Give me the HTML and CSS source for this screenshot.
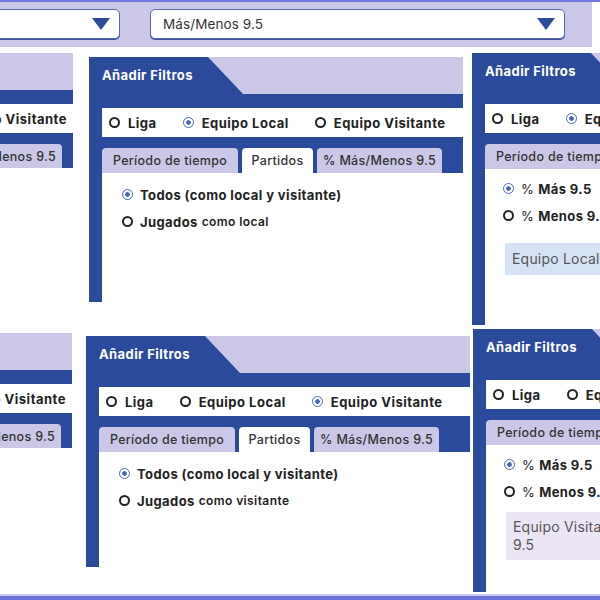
FILE: index.html
```html
<!DOCTYPE html>
<html lang="es">
<head>
<meta charset="utf-8">
<title>Añadir Filtros</title>
<link rel="stylesheet" href="styles.css">
</head>
<body>
<main class="sheet">
  <header class="topbar">
    <div class="select select-a"><span class="select-text"></span><span class="caret"></span></div>
    <div class="select select-b"><span class="select-text">Más/Menos 9.5</span><span class="caret"></span></div>
  </header>

  <section class="row row-1">
    <div class="crop crop-left crop-l1">
      <div class="panel panel-narrow">
        <div class="p-head"><div class="p-title">Añadir Filtros</div></div>
        <div class="p-body">
          <div class="p-radios">
            <label class="opt"><span class="radio"></span>Liga</label>
            <label class="opt"><span class="radio"></span>Equipo Local</label>
            <label class="opt"><span class="radio"></span>Equipo Visitante</label>
          </div>
          <div class="p-tabs">
            <div class="tab t1">Período de tiempo</div>
            <div class="tab t2">Partidos</div>
            <div class="tab t3">% Más/Menos 9.5</div>
          </div>
        </div>
      </div>
    </div>

    <div class="crop crop-mid crop-m1">
      <div class="panel panel-fill">
        <div class="p-head"><div class="p-title">Añadir Filtros</div></div>
        <div class="p-body">
          <div class="p-radios">
            <label class="opt"><span class="radio"></span>Liga</label>
            <label class="opt"><span class="radio on"></span>Equipo Local</label>
            <label class="opt"><span class="radio"></span>Equipo Visitante</label>
          </div>
          <div class="p-tabs">
            <div class="tab t1">Período de tiempo</div>
            <div class="tab t2 active">Partidos</div>
            <div class="tab t3">% Más/Menos 9.5</div>
          </div>
          <div class="p-content">
            <div class="list-opt"><span class="radio on"></span>Todos (como local y visitante)</div>
            <div class="list-opt"><span class="radio"></span>Jugados <span class="sub">como local</span></div>
          </div>
        </div>
      </div>
    </div>

    <div class="crop crop-right crop-r1">
      <div class="panel panel-wide">
        <div class="p-head"><div class="p-title">Añadir Filtros</div></div>
        <div class="p-body">
          <div class="p-radios">
            <label class="opt"><span class="radio"></span>Liga</label>
            <label class="opt"><span class="radio on"></span>Equipo Local</label>
            <label class="opt"><span class="radio"></span>Equipo Visitante</label>
          </div>
          <div class="p-tabs">
            <div class="tab t1">Período de tiempo</div>
            <div class="tab t2">Partidos</div>
            <div class="tab t3 active">% Más/Menos 9.5</div>
          </div>
          <div class="p-content p-content-pct">
            <div class="list-opt"><span class="radio on"></span><span class="pct">%</span> Más 9.5</div>
            <div class="list-opt"><span class="radio"></span><span class="pct">%</span> Menos 9.5</div>
            <div class="note note-blue">Equipo Local Más/Menos 9.5</div>
          </div>
        </div>
      </div>
    </div>
  </section>

  <section class="row row-2">
    <div class="crop crop-left crop-l2">
      <div class="panel panel-narrow">
        <div class="p-head"><div class="p-title">Añadir Filtros</div></div>
        <div class="p-body">
          <div class="p-radios">
            <label class="opt"><span class="radio"></span>Liga</label>
            <label class="opt"><span class="radio"></span>Equipo Local</label>
            <label class="opt"><span class="radio"></span>Equipo Visitante</label>
          </div>
          <div class="p-tabs">
            <div class="tab t1">Período de tiempo</div>
            <div class="tab t2">Partidos</div>
            <div class="tab t3">% Más/Menos 9.5</div>
          </div>
        </div>
      </div>
    </div>

    <div class="crop crop-mid crop-m2">
      <div class="panel panel-fill">
        <div class="p-head"><div class="p-title">Añadir Filtros</div></div>
        <div class="p-body">
          <div class="p-radios">
            <label class="opt"><span class="radio"></span>Liga</label>
            <label class="opt"><span class="radio"></span>Equipo Local</label>
            <label class="opt"><span class="radio on"></span>Equipo Visitante</label>
          </div>
          <div class="p-tabs">
            <div class="tab t1">Período de tiempo</div>
            <div class="tab t2 active">Partidos</div>
            <div class="tab t3">% Más/Menos 9.5</div>
          </div>
          <div class="p-content">
            <div class="list-opt"><span class="radio on"></span>Todos (como local y visitante)</div>
            <div class="list-opt"><span class="radio"></span>Jugados <span class="sub">como visitante</span></div>
          </div>
        </div>
      </div>
    </div>

    <div class="crop crop-right crop-r2">
      <div class="panel panel-wide">
        <div class="p-head"><div class="p-title">Añadir Filtros</div></div>
        <div class="p-body">
          <div class="p-radios">
            <label class="opt"><span class="radio"></span>Liga</label>
            <label class="opt"><span class="radio"></span>Equipo Local</label>
            <label class="opt"><span class="radio on"></span>Equipo Visitante</label>
          </div>
          <div class="p-tabs">
            <div class="tab t1">Período de tiempo</div>
            <div class="tab t2">Partidos</div>
            <div class="tab t3 active">% Más/Menos 9.5</div>
          </div>
          <div class="p-content p-content-pct">
            <div class="list-opt"><span class="radio on"></span><span class="pct">%</span> Más 9.5</div>
            <div class="list-opt"><span class="radio"></span><span class="pct">%</span> Menos 9.5</div>
            <div class="note note-lav">Equipo Visitante Más/Menos<br>9.5</div>
          </div>
        </div>
      </div>
    </div>
  </section>

  <footer class="bottombar"></footer>
</main>
</body>
</html>
```

FILE: styles.css
```css
* { box-sizing: border-box; }

body {
  margin: 0;
  font-family: Inter, "Open Sans", "DejaVu Sans", sans-serif;
  letter-spacing: 0.4px;
  color: #222;
}

.sheet {
  width: 600px;
  height: 600px;
  overflow: hidden;
  background: #fff;
}

/* ---------- top band ---------- */
.topbar {
  width: 600px;
  height: 47px;
  border-top: 2px solid #7378de;
  background: #fff linear-gradient(#cbc8e7, #cbc8e7) no-repeat;
  background-size: 592px 100%;
  display: flex;
  gap: 30px;
  padding-top: 7px;
}

.select {
  height: 30px;
  background: #fff;
  border: 1px solid #5a68ad;
  border-radius: 5px;
  box-shadow: 0 1px 0 #3f4f98;
  display: flex;
  align-items: center;
  justify-content: space-between;
  padding: 0 9px 0 12px;
  flex-shrink: 0;
}

.select-a { width: 132px; margin-left: -12px; }
.select-b { width: 415px; }

.select-text {
  font-size: 13.5px;
  letter-spacing: 0.1px;
  color: #333;
}

.caret {
  width: 0;
  height: 0;
  border-left: 9px solid transparent;
  border-right: 9px solid transparent;
  border-top: 12px solid #2c4a9c;
}

/* ---------- rows / crops ---------- */
.row {
  display: flex;
  align-items: flex-start;
}

.row-1 { height: 276px; margin-top: 6px; }
.row-2 { height: 265px; }

.crop {
  display: flex;
  overflow: hidden;
  flex-shrink: 0;
}

.crop-left { justify-content: flex-end; }

.crop-l1 { width: 73px; height: 115px; }
.crop-m1 { width: 374px; height: 245px; margin-left: 16px; margin-top: 4px; }
.crop-r1 { width: 128px; height: 272px; margin-left: 9px; }

.crop-l2 { width: 72px; height: 115px; margin-top: 4px; }
.crop-m2 { width: 384px; height: 231px; margin-left: 14px; margin-top: 7px; }
.crop-r2 { width: 127px; height: 263px; margin-left: 3px; }

/* ---------- panel ---------- */
.panel {
  display: flex;
  flex-direction: column;
  flex-shrink: 0;
}

.panel-fill { flex: 1; }
.panel-narrow { width: 364px; }
.panel-wide { width: 380px; }

.p-head {
  height: 37px;
  flex-shrink: 0;
  background: #cbc8e7;
}

.p-title {
  width: 154px;
  height: 100%;
  background: #2c4a9c;
  clip-path: polygon(0 0, 119px 0, 154px 100%, 0 100%);
  color: #fff;
  font-weight: 700;
  font-size: 13px;
  line-height: 36px;
  padding-left: 13px;
  white-space: nowrap;
}

.p-body {
  flex: 1;
  display: flex;
  flex-direction: column;
  background: #2c4a9c;
  padding: 14px 0 0 13px;
}

.p-radios {
  height: 29px;
  flex-shrink: 0;
  background: #fff;
  display: flex;
  align-items: center;
  gap: 26px;
  padding-left: 7px;
  white-space: nowrap;
}

.panel-narrow .p-radios {
  justify-content: flex-end;
  padding-right: 6px;
}

.opt {
  display: flex;
  align-items: center;
  gap: 8px;
  font-weight: 700;
  font-size: 13px;
  letter-spacing: 0.5px;
  color: #222;
}

.radio {
  width: 11px;
  height: 11px;
  border: 2px solid #222;
  border-radius: 50%;
  flex-shrink: 0;
}

.radio.on {
  border: 1.5px solid #4865c2;
  background: radial-gradient(circle, #4865c2 0 2px, transparent 2.6px);
}

.p-tabs {
  margin-top: 11px;
  height: 25px;
  flex-shrink: 0;
  display: flex;
  gap: 4px;
}

.tab {
  background: #cbc8e7;
  border-radius: 4px 4px 0 0;
  font-size: 12.5px;
  font-weight: 500;
  letter-spacing: 0.3px;
  color: #333;
  display: flex;
  align-items: center;
  justify-content: center;
  white-space: nowrap;
  flex-shrink: 0;
}

.tab.active { background: #fff; }
.t1 { width: 136px; }
.t2 { width: 71px; }
.t3 { width: 125px; }

.p-content {
  flex: 1;
  background: #fff;
  padding: 8px 0 0 20px;
}

.p-content-pct { padding: 6px 0 0 18px; }

.list-opt {
  height: 27px;
  display: flex;
  align-items: center;
  gap: 7px;
  font-weight: 700;
  font-size: 13px;
  color: #222;
  white-space: nowrap;
}

.sub {
  font-size: 12px;
  font-weight: 600;
  margin-left: -3px;
}

.pct {
  font-weight: 400;
  margin-right: -3px;
}

.note {
  margin: 14px 0 0 2px;
  width: 260px;
  padding: 6px 7px;
  font-size: 14px;
  line-height: 18px;
  letter-spacing: 0.2px;
  color: #555;
}

.note-blue { background: #d5e3f5; padding: 7px; }
.note-lav { background: #ebe5f6; margin-top: 7px; }

/* ---------- bottom band ---------- */
.bottombar {
  height: 6px;
  border-top: 2px solid #c9c8f0;
  background: #6b70d9;
}
```
